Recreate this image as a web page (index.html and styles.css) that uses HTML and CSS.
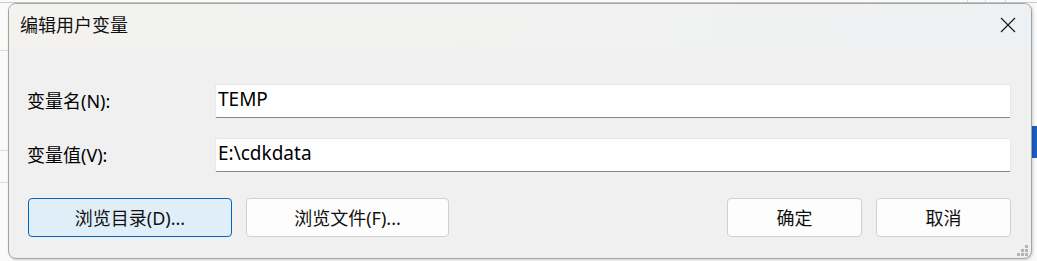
FILE: index.html
```html
<!DOCTYPE html>
<html lang="zh-CN">
<head>
<meta charset="utf-8">
<title>编辑用户变量</title>
<link rel="stylesheet" href="styles.css">
</head>
<body>
<div class="dialog">
  <div class="titlebar">
    <span class="title">编辑用户变量</span>
    <span class="close">
      <svg width="16" height="16" viewBox="0 0 16 16"><path d="M1 1 L15 15 M15 1 L1 15" stroke="#1a1a1a" stroke-width="1.2" fill="none"/></svg>
    </span>
  </div>
  <div class="content">
    <div class="fields">
      <label class="label">变量名(N):</label>
      <input class="field" type="text" value="TEMP">
      <label class="label">变量值(V):</label>
      <input class="field" type="text" value="E:\cdkdata">
    </div>
    <div class="buttons">
      <button class="btn btn-default">浏览目录(D)...</button>
      <button class="btn btn-wide">浏览文件(F)...</button>
      <span class="spacer"></span>
      <button class="btn btn-small">确定</button>
      <button class="btn btn-small">取消</button>
    </div>
  </div>
  <svg class="grip" width="12" height="12" viewBox="0 0 12 12">
    <rect x="8" y="0" width="3" height="3" fill="#b4b4b4"/>
    <rect x="4" y="4" width="3" height="3" fill="#b4b4b4"/>
    <rect x="8" y="4" width="3" height="3" fill="#b4b4b4"/>
    <rect x="0" y="8" width="3" height="3" fill="#b4b4b4"/>
    <rect x="4" y="8" width="3" height="3" fill="#b4b4b4"/>
    <rect x="8" y="8" width="3" height="3" fill="#b4b4b4"/>
  </svg>
</div>
</body>
</html>
```

FILE: styles.css
```css
html, body {
  margin: 0;
  padding: 0;
}
body {
  width: 1037px;
  height: 261px;
  overflow: hidden;
  font-family: "Noto Sans", "Noto Sans CJK SC", sans-serif;
  background-color: #fafafa;
  background-image:
    linear-gradient(#c9c9c9, #c9c9c9),
    linear-gradient(#dcdcdc, #dcdcdc),
    linear-gradient(#dcdcdc, #dcdcdc),
    linear-gradient(#dcdcdc, #dcdcdc),
    linear-gradient(#1b5fc0, #1b5fc0),
    linear-gradient(#d8d8d8, #d8d8d8),
    linear-gradient(#d8d8d8, #d8d8d8),
    linear-gradient(#d8d8d8, #d8d8d8);
  background-size:
    1037px 1px,
    8px 1px,
    8px 1px,
    8px 1px,
    5px 32px,
    1px 4px,
    1px 4px,
    1px 4px;
  background-position:
    0 2px,
    0 50px,
    0 150px,
    0 182px,
    1032px 126px,
    967px 0,
    985px 0,
    1005px 0;
  background-repeat: no-repeat;
}

.dialog {
  position: relative;
  box-sizing: border-box;
  margin: 3px 0 0 8px;
  width: 1024px;
  height: 256px;
  border: 1px solid #a3a3a3;
  border-radius: 8px;
  overflow: hidden;
  background: #f0f0f0;
  box-shadow: 1px 1px 3px rgba(0, 0, 0, 0.18);
}

.titlebar {
  display: flex;
  align-items: center;
  justify-content: space-between;
  height: 43px;
  padding: 0 15px 0 11px;
  background: linear-gradient(90deg, #f3f2ef 0%, #f1f2f1 60%, #eef1f3 100%);
}
.title {
  font-size: 18px;
  color: #111;
  margin-top: -3px;
}
.close {
  display: flex;
  width: 16px;
  height: 16px;
  margin-top: -2px;
}

.content {
  padding: 37px 20px 0 18px;
}

.fields {
  display: grid;
  grid-template-columns: 188px 1fr;
  grid-auto-rows: 34px;
  row-gap: 20px;
  align-items: center;
}
.label {
  font-size: 18px;
  color: #000;
  line-height: 20px;
}
.field {
  box-sizing: border-box;
  width: 100%;
  height: 34px;
  margin: 0;
  padding: 0 2px 4px 2px;
  border: 1px solid #e8e8e8;
  border-bottom: 1px solid #868686;
  border-radius: 2px;
  background: #fff;
  font-family: "Noto Sans", "Noto Sans CJK SC", sans-serif;
  font-size: 19px;
  color: #000;
  outline: none;
}

.buttons {
  display: flex;
  align-items: center;
  margin-top: 26px;
  padding-left: 1px;
  gap: 14px;
}
.spacer {
  flex: 1;
}
.btn {
  box-sizing: border-box;
  height: 39px;
  margin: 0;
  padding: 0 0 2px 0;
  border: 1px solid #d0d0d0;
  border-radius: 4px;
  background: #fdfdfd;
  font-family: "Noto Sans", "Noto Sans CJK SC", sans-serif;
  font-size: 18px;
  color: #111;
}
.btn-default {
  width: 204px;
  background: #e0eef9;
  border-color: #0067c0;
}
.btn-wide {
  width: 203px;
}
.btn-small {
  width: 135px;
}

.grip {
  position: absolute;
  right: 2px;
  bottom: 1px;
}
```
